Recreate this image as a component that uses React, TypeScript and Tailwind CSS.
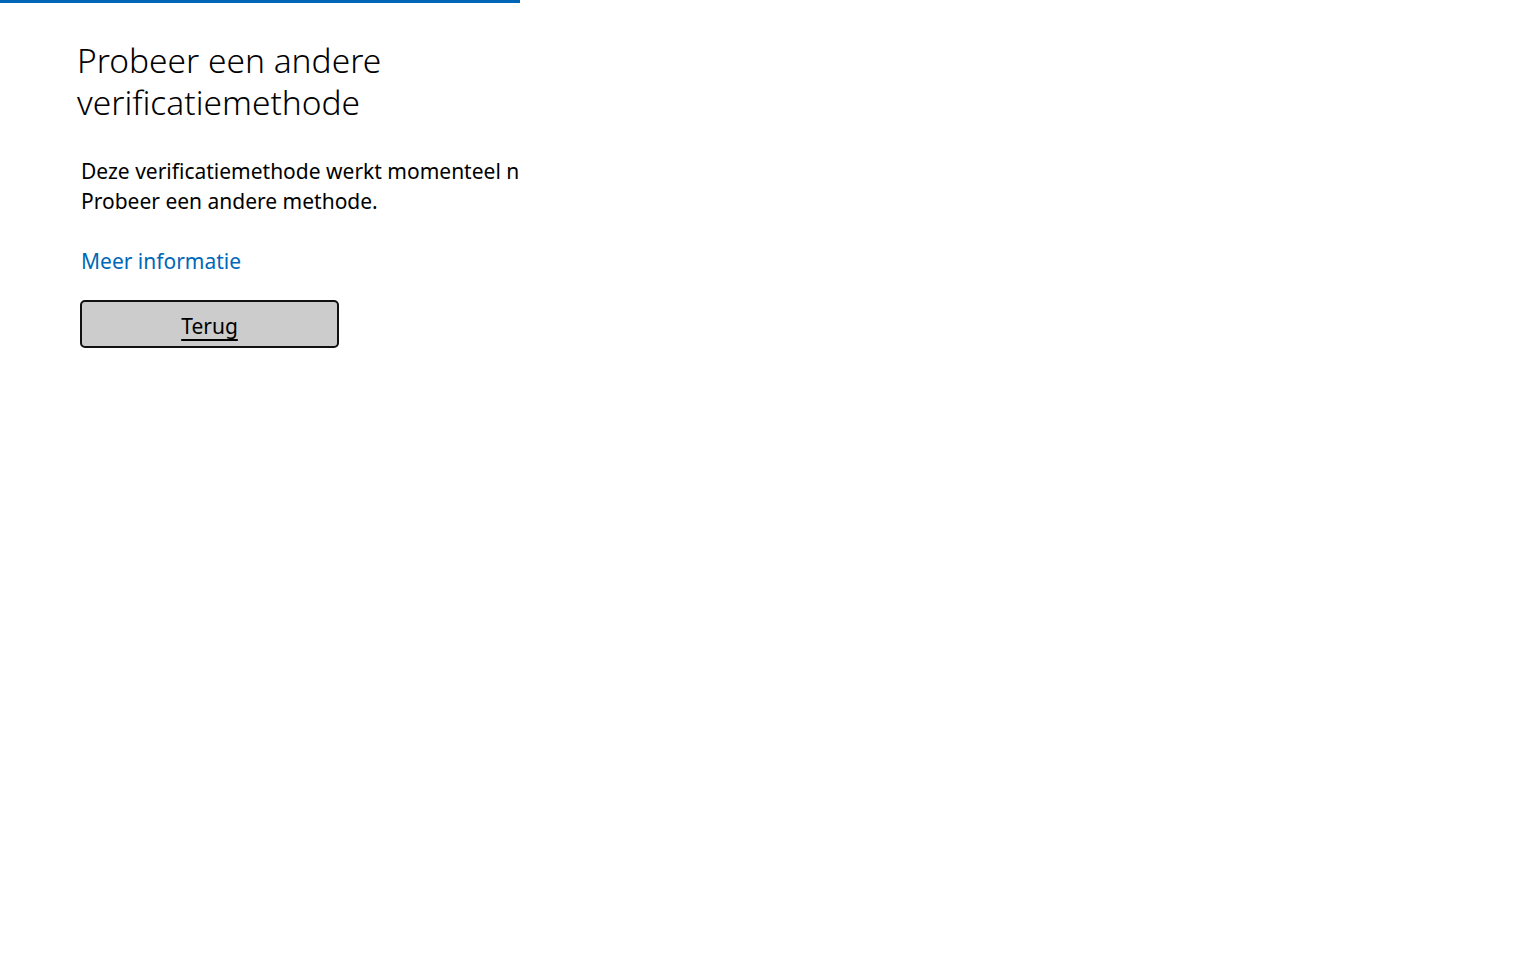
export default function App() {
  return (
    <div className="min-h-screen w-full bg-white" style={{ fontFamily: '"Noto Sans", "Open Sans", sans-serif' }}>
      <div className="w-[520px] overflow-hidden">
        <div className="h-[3px] w-full bg-[#0067b8]" />
        <div className="pl-[77px] pt-[36px]">
          <h1 className="text-[33.5px] font-light leading-[42px] text-black">
            Probeer een andere
            <br />
            verificatiemethode
          </h1>
          <div className="pl-[3px]">
            <p className="mt-[33px] whitespace-nowrap pl-[1px] text-[21px] leading-[30px] text-black">
              Deze verificatiemethode werkt momenteel niet.
              <br />
              Probeer een andere methode.
            </p>
            <a href="#" className="mt-[30px] block w-fit pl-[1px] text-[21px] leading-[30px] text-[#0067b8]">
              Meer informatie
            </a>
            <button className="mt-[24px] h-[48px] w-[259px] rounded-[5px] border-[2.5px] border-[#111111] bg-[#cccccc] pt-[4px] text-[21px] leading-[30px] text-black underline underline-offset-[5px]">
              Terug
            </button>
          </div>
        </div>
      </div>
    </div>
  );
}
